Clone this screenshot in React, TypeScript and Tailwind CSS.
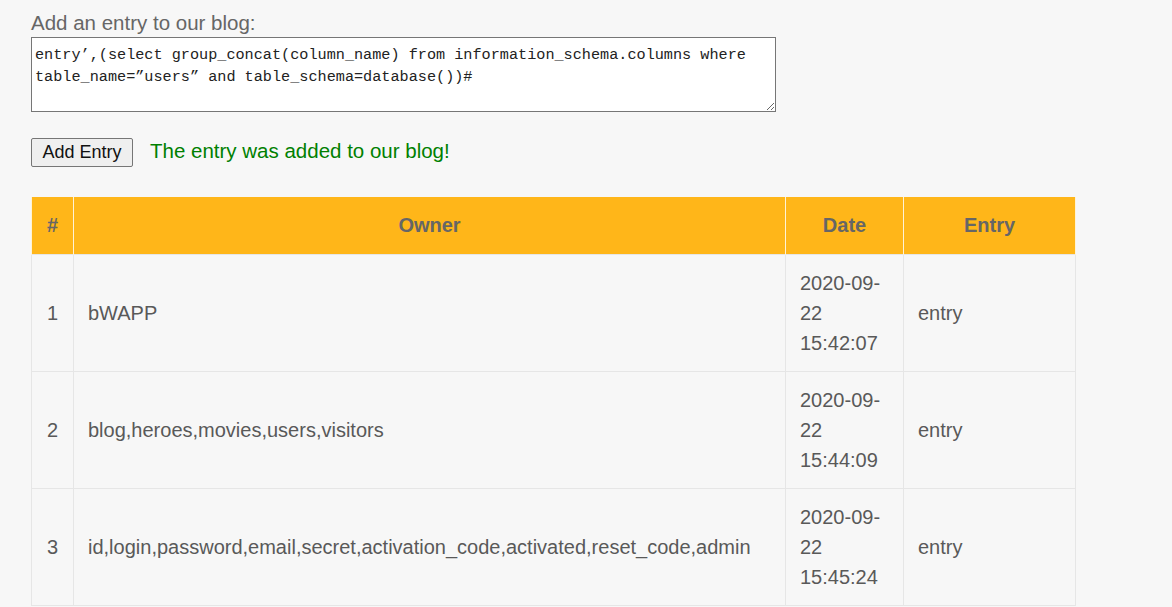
const rows = [
  { id: 1, owner: 'bWAPP', date: ['2020-09-', '22', '15:42:07'], entry: 'entry' },
  { id: 2, owner: 'blog,heroes,movies,users,visitors', date: ['2020-09-', '22', '15:44:09'], entry: 'entry' },
  {
    id: 3,
    owner: 'id,login,password,email,secret,activation_code,activated,reset_code,admin',
    date: ['2020-09-', '22', '15:45:24'],
    entry: 'entry',
  },
];

const sqli =
  'entry\u2019,(select group_concat(column_name) from information_schema.columns where table_name=\u201dusers\u201d and table_schema=database())#';

export default function App() {
  return (
    <div className="min-h-[607px] bg-[#f7f7f7] pl-[31px] pt-[11px] font-['Liberation_Sans',Arial,sans-serif] text-[#595959]">
      <p className="text-[20.5px] leading-[24px] text-[#666]">Add an entry to our blog:</p>
      <textarea
        defaultValue={sqli}
        className="mt-[2px] block h-[75px] w-[745px] border border-[#767676] bg-white px-[3px] pt-[6px] pb-[2px] font-['Liberation_Mono',monospace] text-[15.2px] leading-[22px] text-[#222] outline-none"
      />
      <div className="mt-[26px] flex items-center gap-[17px]">
        <button className="h-[29px] w-[102px] rounded-[2px] border border-[#767676] bg-[#efefef] text-[18px] text-[#111]">
          Add Entry
        </button>
        <span className="-mt-[2px] text-[20.5px] text-[#008000]">The entry was added to our blog!</span>
      </div>
      <table className="mt-[30px] w-[1045px] table-fixed border-collapse text-[20px] leading-[30px]">
        <colgroup>
          <col className="w-[42px]" />
          <col className="w-[712px]" />
          <col className="w-[118px]" />
          <col className="w-[172px]" />
        </colgroup>
        <thead>
          <tr className="h-[57px] bg-[#ffb619] font-bold text-[#666]">
            <th className="border-x border-[#fff3d6]">#</th>
            <th className="border-x border-[#fff3d6]">Owner</th>
            <th className="border-x border-[#fff3d6]">Date</th>
            <th className="border-x border-[#fff3d6]">Entry</th>
          </tr>
        </thead>
        <tbody>
          {rows.map((r) => (
            <tr key={r.id} className="h-[117px]">
              <td className="border border-[#e6e6e6] text-center">{r.id}</td>
              <td className="whitespace-nowrap border border-[#e6e6e6] px-[14px]">{r.owner}</td>
              <td className="border border-[#e6e6e6] px-[14px]">
                {r.date.map((d) => (
                  <div key={d}>{d}</div>
                ))}
              </td>
              <td className="border border-[#e6e6e6] px-[14px]">{r.entry}</td>
            </tr>
          ))}
        </tbody>
      </table>
    </div>
  );
}
